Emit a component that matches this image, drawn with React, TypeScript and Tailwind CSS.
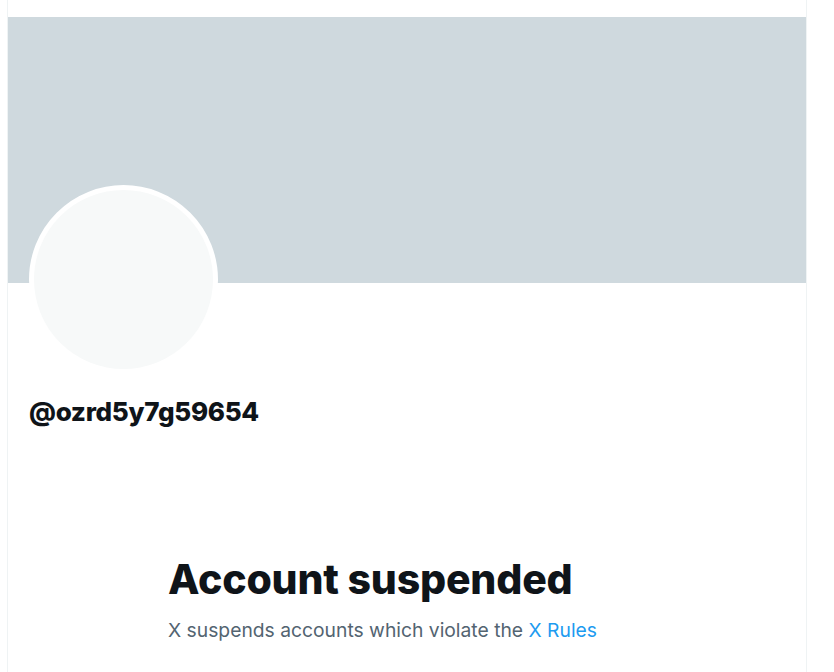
export default function App() {
  return (
    <div className="min-h-screen bg-white" style={{ fontFamily: "Inter, 'Noto Sans', sans-serif" }}>
      <div className="ml-[7px] w-[800px] min-h-[672px] border-x border-[#eff3f4]">
        {/* top bar */}
        <div className="h-[17px]" />
        {/* banner */}
        <div className="h-[266px] bg-[#cfd9de]" />
        {/* avatar + handle */}
        <div className="px-[21px]">
          <div className="-mt-[98px] w-[189px] h-[189px] rounded-full border-[5px] border-white bg-[#f7f9f9]" />
          <div className="mt-[21px] text-[26px] leading-[34px] font-extrabold text-[#0f1419] tracking-[-0.3px]">
            @ozrd5y7g59654
          </div>
        </div>
        {/* empty state */}
        <div className="mt-[126px] pl-[160px]">
          <h2 className="text-[41px] leading-[48px] font-extrabold text-[#0f1419] tracking-[-0.2px]">
            Account suspended
          </h2>
          <p className="mt-[14px] text-[19.3px] leading-[26px] text-[#536471]">
            X suspends accounts which violate the <span className="text-[#1d9bf0]">X Rules</span>
          </p>
        </div>
      </div>
    </div>
  );
}
